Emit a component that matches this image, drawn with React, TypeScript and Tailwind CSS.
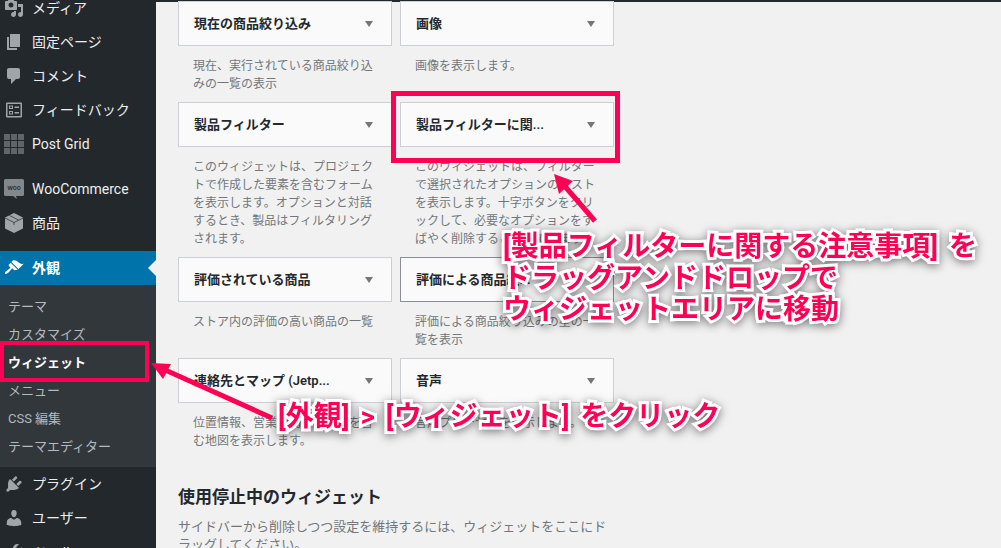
import React from 'react';

const font = { fontFamily: 'Roboto, "Noto Sans CJK JP", sans-serif' };

type IconProps = { className?: string };

const Dash = ({ d, className = 'text-[#a0a5aa]' }: { d: string; className?: string }) => (
    <svg viewBox="0 0 20 20" className={`w-5 h-5 fill-current ${className}`}>
        <path d={d} />
    </svg>
);

const FeedbackIcon = ({ className = 'text-[#a0a5aa]' }: IconProps) => (
    <svg viewBox="0 0 20 20" className={`w-5 h-5 fill-current ${className}`}>
        <path fillRule="evenodd" d="M3 2.500h14a1 1 0 0 1 1 1v13a1 1 0 0 1-1 1H3a1 1 0 0 1-1-1v-13a1 1 0 0 1 1-1zm.5 1.500v12h13V4zM5 5.500h4v3.500H5zm1 1v1.500h2V6.500zM5 11h4v3.500H5zm1 1v1.500h2V12zM10.500 6.500H15V8h-4.500zM10.500 12H15v1.500h-4.500z" />
    </svg>
);

const GridIcon = () => (
    <svg viewBox="0 0 20 20" className="w-5 h-5 fill-[#5f6569]">
        {[0, 7, 14].map((y) => [0, 7, 14].map((x) => <rect key={`${x}-${y}`} x={x} y={y} width="6" height="6" />))}
    </svg>
);

const WooIcon = () => (
    <svg viewBox="0 0 20 20" className="w-5 h-5">
        <path fill="#82878c" d="M1.500 0h17A1.500 1.500 0 0 1 20 1.500v14a1.500 1.500 0 0 1-1.500 1.500H12l1 3-4-3H1.500A1.500 1.500 0 0 1 0 15.500v-14A1.500 1.500 0 0 1 1.500 0z" />
        <text x="10" y="11" textAnchor="middle" fontSize="6.500" fontWeight="600" fill="#23282d" style={{ fontFamily: '"Open Sans", sans-serif' }}>woo</text>
    </svg>
);

const CubeIcon = () => (
    <svg viewBox="0 0 20 20" className="w-5 h-5">
        <path fill="#a0a5aa" d="M10 0l9 4.500v11L10 20l-9-4.500v-11z" />
        <path fill="none" stroke="#23282d" strokeWidth="0.700" d="M1 5l9 4.500L19 5M10 9.500V12M5.500 2.500l9 4.500" />
    </svg>
);

const icons = {
    media: 'M13 11V4c0-.55-.45-1-1-1h-1.670L9 1H5L3.670 3H2c-.55 0-1 .45-1 1v7c0 .55.45 1 1 1h10c.55 0 1-.45 1-1zM7 4.500c1.380 0 2.500 1.120 2.500 2.500S8.380 9.500 7 9.500 4.500 8.380 4.500 7 5.620 4.500 7 4.500zM14 6h5v10.500c0 1.380-1.120 2.500-2.500 2.500S14 17.880 14 16.500s1.120-2.500 2.500-2.500c.17 0 .34.02.5.05V9h-3V6zm-4 8.050V13h2v3.500c0 1.380-1.120 2.500-2.500 2.500S7 17.880 7 16.500 8.120 14 9.500 14c.17 0 .34.02.5.05z',
    page: 'M6 15V2h10v13H6zm-1 1h8v2H3V5h2v11z',
    comment: 'M5 2h9c1.100 0 2 .9 2 2v7c0 1.100-.9 2-2 2h-2l-5 5v-5H5c-1.100 0-2-.9-2-2V4c0-1.100.9-2 2-2z',
    brush: 'M14.480 11.060L7.410 3.990l1.500-1.500c.5-.56 2.300-.47 3.510.32 1.210.8 1.430 1.280 2.910 2.100 1.180.64 2.450 1.260 4.450.85zm-.71.71L6.700 4.700 4.930 6.470c-.39.39-.39 1.020 0 1.410l1.060 1.060c.39.39.39 1.030 0 1.420-.6.6-1.430 1.110-2.210 1.690-.35.26-.7.53-1.010.84C1.430 13.230.4 14.890 1.200 15.700c.8.8 2.460-.23 3.820-1.590.31-.31.58-.66.84-1.010.58-.78 1.090-1.610 1.690-2.210.39-.39 1.020-.39 1.410 0l1.060 1.060c.39.39 1.020.39 1.410 0z',
    plugin: 'M13.110 4.360L9.870 7.600 8 5.730l3.240-3.240c.35-.34 1.050-.2 1.560.32.52.51.66 1.210.31 1.550zm-8 1.770l.91-1.120 9.010 9.010-1.190.84c-.71.71-2.630 1.160-3.820 1.160H6.140L4.900 17.260c-.59.59-1.540.59-2.120 0-.59-.58-.59-1.530 0-2.120l1.240-1.240v-3.880c0-1.130.4-3.190 1.090-3.890zm7.260 3.970l3.240-3.240c.34-.35 1.040-.21 1.550.31.52.51.66 1.210.31 1.550l-3.240 3.250z',
    user: 'M10 9.250c-2.270 0-2.730-3.440-2.730-3.440C7 4.020 7.820 2 9.970 2c2.160 0 2.980 2.020 2.710 3.810 0 0-.41 3.440-2.680 3.440zm0 2.570L12.720 10c2.390 0 4.520 2.330 4.520 4.530v2.490s-3.650 1.130-7.240 1.130c-3.650 0-7.240-1.130-7.240-1.130v-2.490c0-2.250 1.940-4.480 4.470-4.480z',
    tool: 'M16.680 9.770c-1.340 1.340-3.300 1.670-4.950.99l-5.410 6.520c-.99.99-2.590.99-3.570 0-.99-.98-.99-2.580 0-3.570l6.520-5.420c-.68-1.650-.35-3.610.99-4.950 1.280-1.280 3.120-1.620 4.720-1.060l-2.890 2.890 2.820 2.820 2.860-2.870c.53 1.590.18 3.400-1.090 4.650z',
};

const MenuItem = ({ icon, label }: { icon: React.ReactNode; label: string }) => (
    <div className="h-[34px] flex items-center text-[14px] text-[#eeeeee]">
        <div className="w-8 pl-1 shrink-0 flex">{icon}</div>
        <span>{label}</span>
    </div>
);

const Sidebar = () => (
    <aside className="w-[156px] shrink-0 bg-[#23282d] -mt-[9px]">
        <MenuItem icon={<Dash d={icons.media} />} label="メディア" />
        <MenuItem icon={<Dash d={icons.page} />} label="固定ページ" />
        <MenuItem icon={<Dash d={icons.comment} />} label="コメント" />
        <MenuItem icon={<FeedbackIcon />} label="フィードバック" />
        <MenuItem icon={<GridIcon />} label="Post Grid" />
        <div className="h-[11px]" />
        <MenuItem icon={<WooIcon />} label="WooCommerce" />
        <MenuItem icon={<CubeIcon />} label="商品" />
        <div className="h-[11px]" />
        <div className="relative h-[34px] bg-[#0073aa] flex items-center text-[14px] text-white font-semibold">
            <div className="w-8 pl-1 shrink-0 flex"><Dash d={icons.brush} className="text-white" /></div>
            <span>外観</span>
            <div className="absolute right-0 top-[9px] border-y-[8px] border-y-transparent border-r-[8px] border-r-[#f1f1f1]" />
        </div>
        <div className="bg-[#32373c] pt-[8px] pb-[6px] text-[13px] text-[#b4b9be]">
            {['テーマ', 'カスタマイズ', 'ウィジェット', 'メニュー', 'CSS 編集', 'テーマエディター'].map((s) => (
                <div key={s} className={`h-[28px] pl-2 flex items-center ${s === 'ウィジェット' ? 'text-white font-bold' : ''}`}>{s}</div>
            ))}
        </div>
        <MenuItem icon={<Dash d={icons.plugin} />} label="プラグイン" />
        <MenuItem icon={<Dash d={icons.user} />} label="ユーザー" />
        <MenuItem icon={<Dash d={icons.tool} />} label="ツール" />
    </aside>
);

const widgets = [
    { title: '現在の商品絞り込み', desc: '現在、実行されている商品絞り込みの一覧の表示' },
    { title: '画像', desc: '画像を表示します。' },
    { title: '製品フィルター', desc: 'このウィジェットは、プロジェクトで作成した要素を含むフォームを表示します。オプションと対話するとき、製品はフィルタリングされます。' },
    { title: '製品フィルターに関...', desc: 'このウィジェットは、フィルターで選択されたオプションのリストを表示します。十字ボタンをクリックして、必要なオプションをすばやく削除することができます。' },
    { title: '評価されている商品', desc: 'ストア内の評価の高い商品の一覧' },
    { title: '評価による商品絞...', desc: '評価による商品絞り込みの星の一覧を表示', hover: true },
    { title: '連絡先とマップ (Jetp...', desc: '位置情報、営業時間、連絡先を含む地図を表示します。' },
    { title: '音声', desc: '音声プレーヤーを表示します。' },
];

const Widget = ({ title, desc, hover }: { title: string; desc: string; hover?: boolean }) => (
    <div className="pb-[9px]">
        <div className={`h-[45px] bg-[#fafafa] border flex items-center justify-between pl-[15px] pr-[18px] ${hover ? 'border-[#8c8f94]' : 'border-[#ccd0d4]'}`}>
            <span className="text-[13px] font-semibold text-[#23282d]">{title}</span>
            <div className="border-x-[4px] border-x-transparent border-t-[6px] border-t-[#72777c]" />
        </div>
        <p className="pt-[11px] pl-[15px] w-[195px] text-[12px] leading-[18px] text-[#72777c]">{desc}</p>
    </div>
);

const stroked = 'absolute font-bold text-[#ff0055] whitespace-nowrap text-[28px] leading-[31.500px] [word-spacing:4px] [-webkit-text-stroke:6px_#fff] [paint-order:stroke_fill] drop-shadow-[0_2px_5px_rgba(0,0,0,0.5)]';

const Annotations = () => (
    <>
        <div className="absolute left-[391px] top-[91px] w-[229px] h-[72px] border-[5px] border-[#ff0055]" />
        <div className="absolute left-0 top-[341px] w-[149px] h-[41px] border-[4px] border-[#ff0055]" />
        <svg className="absolute left-0 top-0 w-[1001px] h-[548px] pointer-events-none" viewBox="0 0 1001 548">
            <path d="M595 221L562 183" stroke="#ff0055" strokeWidth="5" fill="none" />
            <path d="M554 174L573 181L559 194Z" fill="#ff0055" />
            <path d="M272 418L163 369" stroke="#ff0055" strokeWidth="5" fill="none" />
            <path d="M151 363L171 364L163 379Z" fill="#ff0055" />
        </svg>
        <div className={`${stroked} left-[503px] top-[231px]`}>
            [製品フィルターに関する注意事項] を<br />ドラッグアンドドロップで<br />ウィジェットエリアに移動
        </div>
        <div className={`${stroked} left-[278px] top-[401px]`}>
            [外観] &gt; [ウィジェット] をクリック
        </div>
    </>
);

export default function App() {
    return (
        <div className="relative w-[1001px] h-[548px] overflow-hidden flex bg-[#f1f1f1]" style={font}>
            <Sidebar />
            <main className="flex-1 min-w-0 flex flex-col">
                <div className="h-[2px] shrink-0 bg-[#23282d]" />
                <div className="pl-[22px] w-[480px] -mt-px">
                    <div className="grid grid-cols-[214px_214px] gap-x-2">
                        {widgets.map((w) => <Widget key={w.title} {...w} />)}
                    </div>
                    <h2 className="mt-[26px] text-[17px] font-semibold leading-[24px] text-[#23282d]">使用停止中のウィジェット</h2>
                    <p className="mt-[9px] w-[436px] text-[13px] leading-[18px] text-[#72777c]">サイドバーから削除しつつ設定を維持するには、ウィジェットをここにドラッグしてください。</p>
                </div>
            </main>
            <Annotations />
        </div>
    );
}
